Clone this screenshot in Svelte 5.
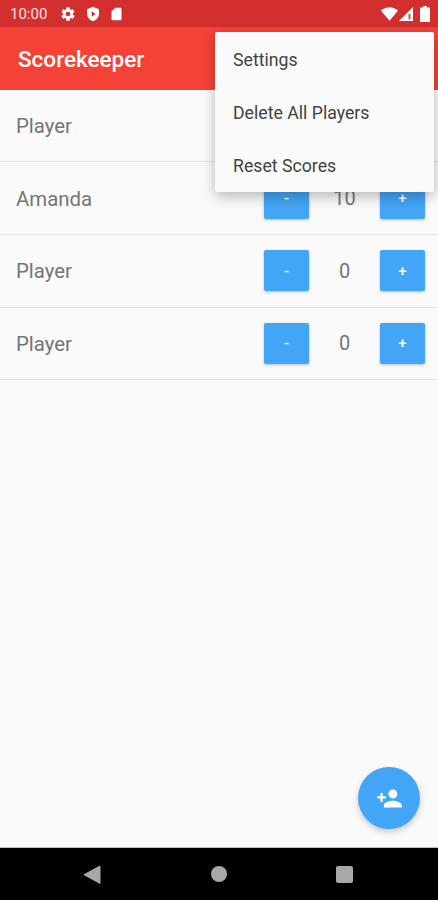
<script>
  const players = [
    { name: 'Player', score: 0 },
    { name: 'Amanda', score: 10 },
    { name: 'Player', score: 0 },
    { name: 'Player', score: 0 }
  ];
  const menu = ['Settings', 'Delete All Players', 'Reset Scores'];
</script>

<div class="screen">
  <header class="status">
    <span class="time">10:00</span>
    <svg class="ic" style="margin-left:13px" width="16" height="16" viewBox="0 0 24 24" fill="#fff"><path d="M19.4 13c.05-.3.1-.65.1-1s-.03-.7-.1-1l2.1-1.65c.2-.15.25-.42.12-.64l-2-3.46c-.12-.22-.39-.3-.61-.22l-2.49 1c-.52-.4-1.08-.73-1.69-.98l-.38-2.65A.49.49 0 0 0 14 2h-4c-.25 0-.46.18-.49.42l-.38 2.65c-.61.25-1.17.59-1.69.98l-2.49-1c-.23-.09-.49 0-.61.22l-2 3.46c-.13.22-.07.49.12.64L4.57 11c-.04.32-.07.66-.07 1s.03.68.07 1l-2.11 1.65c-.19.15-.24.42-.12.64l2 3.46c.12.22.39.3.61.22l2.49-1c.52.4 1.08.73 1.69.98l.38 2.65c.03.24.24.42.49.42h4c.25 0 .46-.18.49-.42l.38-2.65c.61-.25 1.17-.59 1.69-.98l2.49 1c.23.09.49 0 .61-.22l2-3.46c.12-.22.07-.49-.12-.64L19.4 13zM12 15.5a3.5 3.5 0 1 1 0-7 3.5 3.5 0 0 1 0 7z"/></svg>
    <svg class="ic" style="margin-left:9px" width="16" height="16" viewBox="0 0 24 24"><path fill="#fff" d="M12 1 3 5v6c0 5.5 3.8 10.7 9 12 5.200-1.300 9-6.500 9-12V5z"/><path fill="#d32f2f" d="M10 8v8l6-4z"/></svg>
    <svg class="ic" style="margin-left:8px" width="15" height="16" viewBox="0 0 24 24" fill="#fff"><path d="M18 2h-8L4 8v12c0 1.100.9 2 2 2h12c1.100 0 2-.9 2-2V4c0-1.100-.9-2-2-2z"/></svg>
    <span class="spacer"></span>
    <svg class="ic" width="17" height="14" viewBox="0 0 24 19" fill="#fff"><path d="M12 19 0 5C3.300 2 7.400 0 12 0s8.700 2 12 5z"/></svg>
    <svg class="ic" style="margin-left:1px" width="14" height="14" viewBox="0 0 14 14"><path fill="#fff" d="M0 14 14 0v14z"/><path fill="#d32f2f" d="M9.500 7h2v5.500h-2z" opacity=".85"/></svg>
    <svg class="ic" style="margin-left:7px" width="10" height="16" viewBox="0 0 10 16" fill="#fff"><path d="M3 0h4v1.500h2c.6 0 1 .4 1 1V15c0 .6-.4 1-1 1H1c-.6 0-1-.4-1-1V2.500c0-.6.4-1 1-1h2z"/></svg>
  </header>

  <div class="appbar"><h1>Scorekeeper</h1></div>

  <main class="list">
    {#each players as p}
      <div class="row">
        <span class="name">{p.name}</span>
        <div class="controls">
          <button class="btn minus">-</button>
          <span class="score">{p.score}</span>
          <button class="btn">+</button>
        </div>
      </div>
    {/each}
  </main>

  <button class="fab" aria-label="Add player">
    <svg width="27" height="27" viewBox="0 0 24 24" fill="#fff"><path d="M15 12c2.210 0 4-1.790 4-4s-1.790-4-4-4-4 1.790-4 4 1.790 4 4 4zm-9-2V7H4v3H1v2h3v3h2v-3h3v-2H6zm9 4c-2.670 0-8 1.340-8 4v2h16v-2c0-2.660-5.330-4-8-4z"/></svg>
  </button>

  <nav class="navbar">
    <svg width="18" height="19" viewBox="0 0 18 19" fill="#a8a8a8"><path d="M17 1v17.500L1 9.700z" stroke="#a8a8a8" stroke-linejoin="round"/></svg>
    <span class="circle"></span>
    <span class="square"></span>
  </nav>

  <div class="menu">
    {#each menu as m}
      <div class="item">{m}</div>
    {/each}
  </div>
</div>

<style>
  :global(body) { margin: 0; }
  .screen {
    position: relative;
    width: 438px;
    height: 900px;
    display: flex;
    flex-direction: column;
    background: #fafafa;
    font-family: Roboto, "Noto Sans", sans-serif;
    overflow: hidden;
  }
  .status {
    height: 27px;
    flex: none;
    background: #d32f2f;
    display: flex;
    align-items: center;
    padding: 0 8px 0 10px;
    color: #fbe4e4;
    font-size: 15px;
  }
  .ic { flex: none; }
  .spacer { flex: 1; }
  .appbar {
    height: 62.500px;
    flex: none;
    background: #f44336;
    display: flex;
    align-items: center;
    padding: 2px 0 0 18px;
    box-sizing: border-box;
  }
  h1 {
    margin: 0;
    color: #fff;
    font-size: 22.500px;
    font-weight: 500;
  }
  .list { flex: 1; }
  .row {
    height: 72.700px;
    box-sizing: border-box;
    display: flex;
    align-items: center;
    justify-content: space-between;
    padding: 0 13px 0 16px;
    border-bottom: 1.500px solid #e2e2e2;
  }
  .name {
    color: #757575;
    font-size: 20.400px;
    padding-top: 1px;
  }
  .controls {
    display: flex;
    align-items: center;
  }
  .score {
    width: 71px;
    text-align: center;
    color: #757575;
    font-size: 20px;
  }
  .btn {
    width: 45px;
    height: 41px;
    padding: 0;
    border: none;
    border-radius: 2px;
    background: #42a5f5;
    color: #fff;
    font-family: inherit;
    font-size: 15px;
    font-weight: 500;
    box-shadow: 0 1px 3px rgba(0, 0, 0, 0.25);
  }
  .fab {
    position: absolute;
    left: 358px;
    top: 767px;
    width: 62px;
    height: 62px;
    border-radius: 50%;
    border: none;
    padding: 0;
    background: #42a5f5;
    display: flex;
    align-items: center;
    justify-content: center;
    box-shadow: 0 3px 6px rgba(0, 0, 0, 0.2);
  }
  .navbar {
    height: 53px;
    flex: none;
    background: #000;
    display: flex;
    align-items: center;
    position: relative;
    padding-left: 83px;
    border-top: 1px solid #bdbdbd;
    box-sizing: border-box;
  }
  .circle {
    width: 16px;
    height: 16px;
    border-radius: 50%;
    background: #a8a8a8;
    margin-left: 110px;
  }
  .square {
    width: 17px;
    height: 17px;
    border-radius: 2px;
    background: #a8a8a8;
    margin-left: 109px;
  }
  .menu {
    position: absolute;
    left: 215px;
    top: 32px;
    width: 219px;
    height: 160px;
    background: #fafafa;
    border-radius: 2px;
    box-shadow: 0 4px 14px rgba(0, 0, 0, 0.28);
    display: flex;
    flex-direction: column;
    padding: 1px 0 0;
    box-sizing: border-box;
  }
  .item {
    flex: 1;
    display: flex;
    align-items: center;
    padding-left: 18px;
    color: #424242;
    font-size: 17.700px;
  }
</style>
